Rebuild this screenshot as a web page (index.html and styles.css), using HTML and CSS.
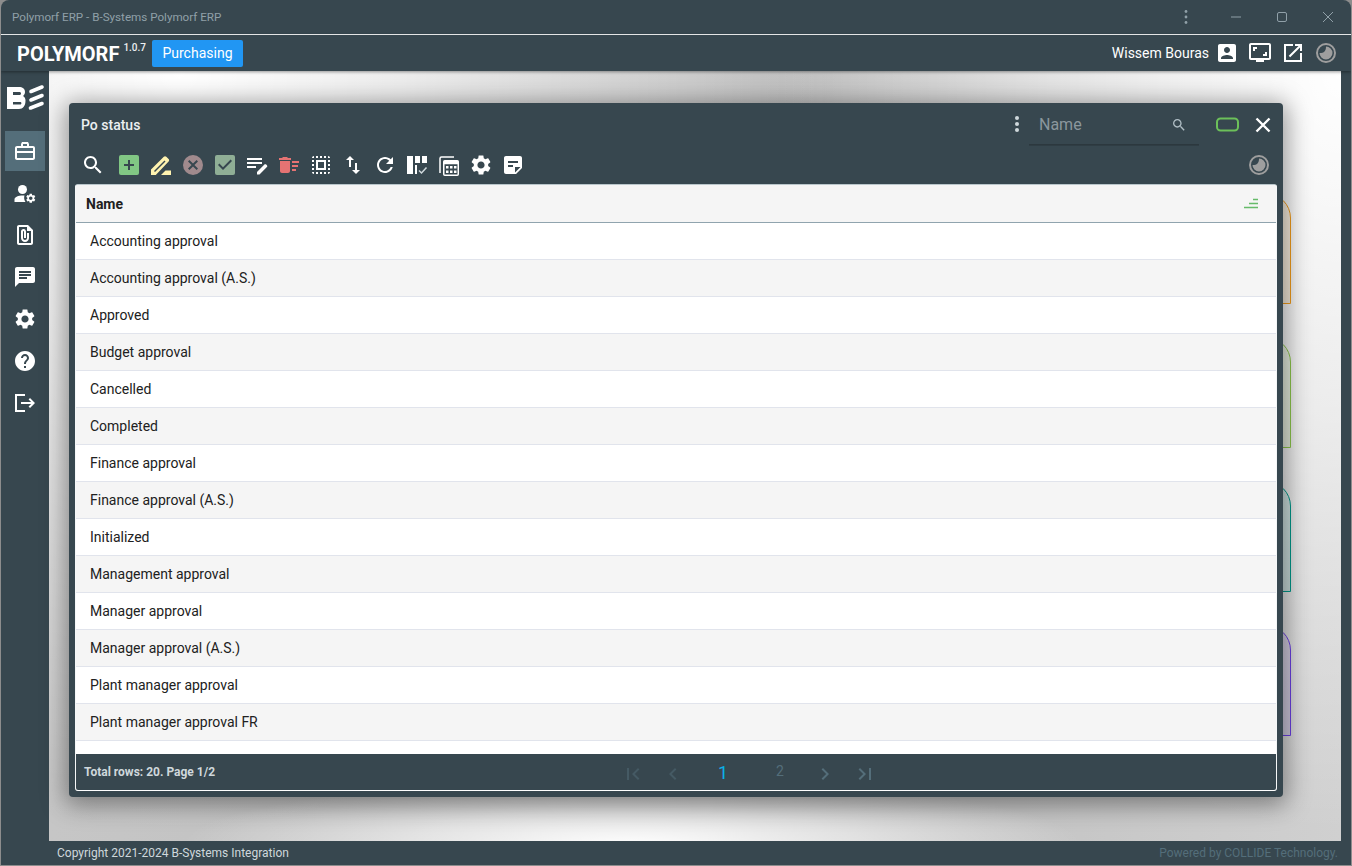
FILE: index.html
```html
<!DOCTYPE html>
<html lang="en">
<head>
<meta charset="utf-8">
<title>Polymorf ERP - B-Systems Polymorf ERP</title>
<link rel="stylesheet" href="styles.css">
</head>
<body>
<div class="window">
  <div class="titlebar">
    <span class="title-text">Polymorf ERP - B-Systems Polymorf ERP</span>
    <div class="title-controls">
      <svg class="ctl-dots" width="12" height="16" viewBox="0 0 12 16"><circle cx="6" cy="2.500" r="1.400"/><circle cx="6" cy="8" r="1.400"/><circle cx="6" cy="13.500" r="1.400"/></svg>
      <svg class="ctl" width="12" height="12" viewBox="0 0 12 12"><path d="M1 6h10"/></svg>
      <svg class="ctl" width="12" height="12" viewBox="0 0 12 12"><rect x="1.500" y="1.500" width="9" height="9" rx="1.500"/></svg>
      <svg class="ctl" width="12" height="12" viewBox="0 0 12 12"><path d="M1 1l10 10M11 1L1 11"/></svg>
    </div>
  </div>
  <header class="appbar">
    <span class="brand">POLYMORF</span><span class="version">1.0.7</span>
    <span class="module">Purchasing</span>
    <div class="user">
      <span class="user-name">Wissem Bouras</span>
      <svg class="ico" viewBox="0 0 24 24"><path d="M3 5v14c0 1.100.89 2 2 2h14c1.100 0 2-.9 2-2V5c0-1.100-.91-2-2-2H5c-1.110 0-2 .9-2 2zm12 4c0 1.660-1.340 3-3 3s-3-1.340-3-3 1.340-3 3-3 3 1.340 3 3zm-9 8c0-2 4-3.100 6-3.100s6 1.100 6 3.100v1H6v-1z"/></svg>
      <svg class="ico" viewBox="0 0 24 24"><path d="M3 2h18c1.100 0 2 .9 2 2v13c0 1.100-.9 2-2 2h-5v2H8v-2H3c-1.100 0-2-.9-2-2V4c0-1.100.9-2 2-2zm0 2v13h18V4H3zm2 2h4v2H7v2H5V6zm14 9h-4v-2h2v-2h2v4z"/></svg>
      <svg class="ico" viewBox="0 0 24 24"><path d="M19 19H5V5h7V3H3v18h18v-9h-2v7zM14 3v2h3.590l-9.830 9.830 1.410 1.410L19 6.410V10h2V3h-7z"/></svg>
      <svg class="ico" viewBox="0 0 24 24"><circle class="hist-ring" cx="12" cy="12" r="9"/><path class="hist-a" d="M12 5.500a6.500 6.500 0 1 1-6.500 6.500c2.500 0 4-.3 5-1.500s1.500-2.500 1.500-5z"/></svg>
    </div>
  </header>
  <div class="middle">
    <nav class="sidebar">
      <svg class="logo" width="36" height="24" viewBox="0 0 36 24"><path fill-rule="evenodd" d="M0 2h12c3.500 0 6 1.800 6 5 0 1.800-.8 3.200-2 4 1.500.8 2.500 2.200 2.500 4.500 0 5.500-2.500 8.500-6.500 8.500H0zM6 7v3h6.500c.9 0 1.500-.6 1.500-1.500S13.400 7 12.500 7zm0 10v2.500h7c.9 0 1.400-.5 1.400-1.250S13.900 17 13 17z"/><path class="logo-bars" d="M24 6.500 35 2M24 15 35 10.500M23.500 23 35 18.500"/></svg>
      <a class="nav-item active"><svg class="ico" viewBox="0 0 24 24"><path d="M20 7h-4V5l-1-2H9L8 5v2H4c-1.100 0-2 .9-2 2v10c0 1.100.9 2 2 2h16c1.100 0 2-.9 2-2V9c0-1.100-.9-2-2-2zM10 5h4v2h-4V5zM4 9h16v3H4V9zm0 10v-5h16v5H4z"/></svg></a>
      <a class="nav-item"><svg class="ico" viewBox="0 0 24 24"><circle cx="9.500" cy="7.500" r="4.500"/><path d="M1.500 20v-2.500c0-2.500 4-4 8-4 .7 0 1.300 0 2 .1-.7 1.900-.4 4.600 1 6.400z"/><g transform="translate(12 10.500) scale(.48)"><path d="M19.140 12.940c.04-.3.06-.61.06-.94 0-.32-.02-.64-.07-.94l2.030-1.580c.18-.14.23-.41.12-.61l-1.920-3.320c-.12-.22-.37-.29-.59-.22l-2.390.96c-.5-.38-1.030-.7-1.620-.94l-.36-2.540c-.04-.24-.24-.41-.48-.41h-3.840c-.24 0-.43.17-.47.41l-.36 2.540c-.59.24-1.130.57-1.620.94l-2.390-.96c-.22-.08-.47 0-.59.22L2.740 8.870c-.12.21-.08.47.12.61l2.030 1.580c-.05.3-.09.63-.09.94s.02.64.07.94l-2.030 1.580c-.18.14-.23.41-.12.61l1.920 3.320c.12.22.37.29.59.22l2.390-.96c.5.38 1.030.7 1.620.94l.36 2.540c.05.24.24.41.48.41h3.840c.24 0 .44-.17.47-.41l.36-2.540c.59-.24 1.130-.56 1.620-.94l2.390.96c.22.08.47 0 .59-.22l1.920-3.320c.12-.22.07-.47-.12-.61l-2.010-1.580zM12 15.600c-1.980 0-3.600-1.620-3.600-3.600s1.620-3.600 3.600-3.600 3.600 1.620 3.600 3.600-1.620 3.600-3.600 3.600z"/></g></svg></a>
      <a class="nav-item"><svg class="ico" viewBox="0 0 24 24"><path d="M15 2H6c-1.100 0-2 .9-2 2v16c0 1.100.9 2 2 2h12c1.100 0 2-.9 2-2V7l-5-5zM6 20V4h8v4h4v12H6zm10-10v5c0 2.210-1.790 4-4 4s-4-1.790-4-4V8.500c0-1.470 1.260-2.640 2.760-2.490 1.300.13 2.240 1.320 2.240 2.630V15h-2V8.500c0-.28-.22-.5-.5-.5s-.5.22-.5.5V15c0 1.100.9 2 2 2s2-.9 2-2v-5h2z"/></svg></a>
      <a class="nav-item"><svg class="ico" viewBox="0 0 24 24"><path d="M20 2H4c-1.100 0-1.990.9-1.990 2L2 22l4-4h14c1.100 0 2-.9 2-2V4c0-1.100-.9-2-2-2zM6 12h8v2H6v-2zm0-3h12v2H6V9zm0-3h12v2H6V6z"/></svg></a>
      <a class="nav-item"><svg class="ico" viewBox="0 0 24 24"><use href="#gear"/></svg></a>
      <a class="nav-item"><svg class="ico" viewBox="0 0 24 24"><path d="M12 2C6.480 2 2 6.480 2 12s4.480 10 10 10 10-4.480 10-10S17.520 2 12 2zm1 17h-2v-2h2v2zm2.070-7.750l-.9.92C13.450 12.900 13 13.500 13 15h-2v-.5c0-1.100.45-2.100 1.170-2.830l1.240-1.260c.37-.36.59-.86.59-1.410 0-1.100-.9-2-2-2s-2 .9-2 2H8c0-2.210 1.790-4 4-4s4 1.790 4 4c0 .88-.36 1.680-.93 2.250z"/></svg></a>
      <a class="nav-item"><svg class="ico" viewBox="0 0 24 24"><path d="M17 7l-1.410 1.410L18.170 11H8v2h10.170l-2.580 2.580L17 17l5-5zM4 5h8V3H2v18h10v-2H4V5z"/></svg></a>
    </nav>
    <main class="desktop">
      <div class="card card-orange"></div>
      <div class="card card-green"></div>
      <div class="card card-teal"></div>
      <div class="card card-purple"></div>
      <section class="modal">
        <div class="modal-head">
          <span class="modal-title">Po status</span>
          <svg class="head-dots" width="6" height="18" viewBox="0 0 6 18"><circle cx="3" cy="3" r="2"/><circle cx="3" cy="9" r="2"/><circle cx="3" cy="15" r="2"/></svg>
          <label class="search">
            <span class="search-label">Name</span>
            <svg class="search-ico" viewBox="0 0 24 24"><use href="#search"/></svg>
          </label>
          <svg class="size-ico" width="24" height="16" viewBox="0 0 24 16"><rect x="1" y="1.500" width="21" height="12" rx="3.500"/></svg>
          <svg class="close-ico" width="24" height="24" viewBox="0 0 24 24"><path d="M5.500 5.500l13 13M18.500 5.500l-13 13"/></svg>
        </div>
        <div class="toolbar">
          <svg class="ico tool-first" viewBox="0 0 24 24"><path id="search" d="M15.500 14h-.79l-.28-.27C15.410 12.590 16 11.110 16 9.500 16 5.910 13.090 3 9.500 3S3 5.910 3 9.500 5.910 16 9.500 16c1.610 0 3.090-.59 4.230-1.570l.27.28v.79l5 4.990L20.490 19l-4.990-5zm-6 0C7.010 14 5 11.990 5 9.500S7.010 5 9.500 5 14 7.010 14 9.500 11.990 14 9.500 14z"/></svg>
          <svg class="ico tool-add" viewBox="0 0 24 24"><rect x="2" y="2" width="20" height="20" rx="2"/><path class="dark" d="M11 7h2v4h4v2h-4v4h-2v-4H7v-2h4z"/></svg>
          <svg class="ico tool-edit" viewBox="0 0 24 24"><path d="M2 22v-5.500L14.800 3.700c.7-.7 1.800-.7 2.500 0l2.300 2.300c.7.7.7 1.800 0 2.500L6.800 22z"/><path class="slit" d="M5.500 18.500 16 8"/><path d="M12 22l4.500-4.500H22V22z"/></svg>
          <svg class="ico tool-cancel" viewBox="0 0 24 24"><circle cx="12" cy="12" r="10"/><path class="dark" d="M8.400 7L12 10.600 15.600 7 17 8.400 13.400 12l3.600 3.600-1.400 1.400-3.600-3.600L8.400 17 7 15.600l3.600-3.600L7 8.400z"/></svg>
          <svg class="ico tool-ok" viewBox="0 0 24 24"><rect x="2" y="2" width="20" height="20" rx="2"/><path class="dark" d="M10 17l-5-5 1.400-1.400 3.600 3.600 7.600-7.600L19 8z"/></svg>
          <svg class="ico" viewBox="0 0 24 24"><path d="M2 5h15v2H2zm0 4h15v2H2zm0 4h9v2H2zm12.500 8.500H12V19l7.400-7.400c.5-.5 1.300-.5 1.800 0l.7.7c.5.5.5 1.300 0 1.800z"/></svg>
          <svg class="ico tool-del" viewBox="0 0 24 24"><path d="M15 16h4v2h-4zm0-8h7v2h-7zm0 4h6v2h-6zM3 18c0 1.100.9 2 2 2h6c1.100 0 2-.9 2-2V8H3v10zM14 5h-3l-1-1H6L5 5H2v2h12z"/></svg>
          <svg class="ico" viewBox="0 0 24 24"><path d="M3 5h2V3c-1.100 0-2 .9-2 2zm0 8h2v-2H3v2zm4 8h2v-2H7v2zM3 9h2V7H3v2zm10-6h-2v2h2V3zm6 0v2h2c0-1.100-.9-2-2-2zM5 21v-2H3c0 1.100.9 2 2 2zm-2-4h2v-2H3v2zM9 3H7v2h2V3zm2 18h2v-2h-2v2zm8-8h2v-2h-2v2zm0 8c1.100 0 2-.9 2-2h-2v2zm0-12h2V7h-2v2zm0 8h2v-2h-2v2zm-4 4h2v-2h-2v2zm0-16h2V3h-2v2zM7 17h10V7H7v10zm2-8h6v6H9V9z"/></svg>
          <svg class="ico" viewBox="0 0 24 24"><path d="M16 17.010V10h-2v7.010h-3L15 21l4-3.990h-3zM9 3L5 6.990h3V14h2V6.990h3L9 3z"/></svg>
          <svg class="ico" viewBox="0 0 24 24"><path d="M17.650 6.350C16.200 4.900 14.210 4 12 4c-4.420 0-7.990 3.580-7.990 8s3.570 8 7.990 8c3.730 0 6.840-2.550 7.730-6h-2.080c-.82 2.330-3.040 4-5.650 4-3.310 0-6-2.690-6-6s2.690-6 6-6c1.660 0 3.140.69 4.220 1.780L13 11h7V4l-2.350 2.350z"/></svg>
          <svg class="ico" viewBox="0 0 24 24"><path d="M2 3h6v18H2zm8 0h5v7h-5zm7 0h5v7h-5zm-7 9h2v9h-2z"/><path class="thin" d="M14 17.500l2.500 2.500 5-5.500"/></svg>
          <svg class="ico" viewBox="0 0 24 24"><path class="outline" d="M3 20V5.500C3 4.700 3.700 4 4.500 4H17"/><rect class="outline" x="6.750" y="7.750" width="14.500" height="14.500" rx="1"/><path d="M6.750 7.750h14.500v3.500H6.750zM9 13h2.500v2.500H9zm4 0h2.500v2.500H13zm4 0h2.500v2.500H17zM9 17.500h2.500V20H9zm4 0h2.500V20H13zm4 0h2.500V20H17z"/></svg>
          <svg class="ico" viewBox="0 0 24 24"><path id="gear" d="M19.140 12.940c.04-.3.06-.61.06-.94 0-.32-.02-.64-.07-.94l2.030-1.580c.18-.14.23-.41.12-.61l-1.920-3.320c-.12-.22-.37-.29-.59-.22l-2.390.96c-.5-.38-1.030-.7-1.620-.94l-.36-2.540c-.04-.24-.24-.41-.48-.41h-3.840c-.24 0-.43.17-.47.41l-.36 2.540c-.59.24-1.130.57-1.620.94l-2.390-.96c-.22-.08-.47 0-.59.22L2.740 8.870c-.12.21-.08.47.12.61l2.030 1.580c-.05.3-.09.63-.09.94s.02.64.07.94l-2.030 1.580c-.18.14-.23.41-.12.61l1.920 3.320c.12.22.37.29.59.22l2.390-.96c.5.38 1.030.7 1.620.94l.36 2.540c.05.24.24.41.48.41h3.840c.24 0 .44-.17.47-.41l.36-2.540c.59-.24 1.130-.56 1.620-.94l2.390.96c.22.08.47 0 .59-.22l1.920-3.320c.12-.22.07-.47-.12-.61l-2.010-1.580zM12 15.600c-1.980 0-3.600-1.620-3.600-3.600s1.620-3.600 3.600-3.600 3.600 1.620 3.600 3.600-1.620 3.600-3.600 3.600z"/></svg>
          <svg class="ico" viewBox="0 0 24 24"><path d="M19 3H4.990C3.890 3 3 3.900 3 5l.01 14c0 1.100.89 2 1.990 2h10l6-6V5c0-1.100-.9-2-2-2zM7 8h10v2H7V8zm5 6H7v-2h5v2zm2 5.500V14h5.500L14 19.500z"/></svg>
          <svg class="ico tool-hist" viewBox="0 0 24 24"><circle class="hist-ring" cx="12" cy="12" r="9"/><path class="hist-a" d="M12 5.500a6.500 6.500 0 1 1-6.500 6.500c2.500 0 4-.3 5-1.500s1.500-2.500 1.500-5z"/></svg>
        </div>
        <div class="grid">
          <div class="grid-head">
            <span>Name</span>
            <svg class="sort-ico" width="16" height="12" viewBox="0 0 16 12"><path d="M10 1.500h5M6 5.500h9M1 9.500h14"/></svg>
          </div>
          <div class="grid-body">
            <div class="row">Accounting approval</div>
            <div class="row">Accounting approval (A.S.)</div>
            <div class="row">Approved</div>
            <div class="row">Budget approval</div>
            <div class="row">Cancelled</div>
            <div class="row">Completed</div>
            <div class="row">Finance approval</div>
            <div class="row">Finance approval (A.S.)</div>
            <div class="row">Initialized</div>
            <div class="row">Management approval</div>
            <div class="row">Manager approval</div>
            <div class="row">Manager approval (A.S.)</div>
            <div class="row">Plant manager approval</div>
            <div class="row">Plant manager approval FR</div>
          </div>
          <div class="pager">
            <span class="pager-total">Total rows: 20. Page 1/2</span>
            <div class="pager-nav">
              <svg class="pg pg-off" viewBox="0 0 24 24"><path d="M18.410 16.590L13.820 12l4.590-4.590L17 6l-6 6 6 6zM6 6h2v12H6z"/></svg>
              <svg class="pg pg-off" viewBox="0 0 24 24"><path d="M15.410 7.410L14 6l-6 6 6 6 1.410-1.410L10.830 12z"/></svg>
              <span class="pg-cur">1</span>
              <span class="pg-num">2</span>
              <svg class="pg pg-on" viewBox="0 0 24 24"><path d="M10 6L8.590 7.410 13.170 12l-4.580 4.590L10 18l6-6z"/></svg>
              <svg class="pg pg-on" viewBox="0 0 24 24"><path d="M5.590 7.410L10.180 12l-4.590 4.590L7 18l6-6-6-6zM16 6h2v12h-2z"/></svg>
            </div>
          </div>
        </div>
      </section>
    </main>
    <div class="right-strip"></div>
  </div>
  <footer class="statusbar">
    <span class="copyright">Copyright 2021-2024 B-Systems Integration</span>
    <span class="powered">Powered by COLLIDE Technology.</span>
  </footer>
</div>
</body>
</html>
```

FILE: styles.css
```css
* { box-sizing: border-box; }
html, body { height: 100%; }
body {
  margin: 0;
  background: #8d8d8d;
  font-family: Roboto, "Liberation Sans", sans-serif;
  overflow: hidden;
}
.window {
  height: 865px;
  margin: 0 1px 0 1px;
  background: #37474f;
  border-radius: 8px 8px 0 0;
  display: flex;
  flex-direction: column;
  overflow: hidden;
}
.titlebar {
  height: 35px;
  flex: none;
  display: flex;
  align-items: center;
  justify-content: space-between;
  border-bottom: 1px solid #f4f6f7;
  padding: 1px 17px 2px 11px;
}
.title-text { font-size: 11.650px; color: #90a0a8; }
.title-controls { display: flex; align-items: center; }
.ctl-dots { fill: #90a0a8; margin-right: 38px; }
.ctl { fill: none; stroke: #90a0a8; stroke-width: 1; margin-left: 34px; }
.ctl-dots + .ctl { margin-left: 0; }
.appbar {
  height: 36px;
  flex: none;
  display: flex;
  align-items: center;
  padding: 0 13px 0 16px;
  box-shadow: 0 1px 3px rgba(0,0,0,.4);
  position: relative;
  z-index: 2;
}
.brand { font-size: 20px; font-weight: 700; color: #fff; margin-top: 2px; }
.version { font-size: 10px; color: #eceff1; font-weight: 500; margin: -12px 0 0 4px; }
.module {
  margin-left: 6px;
  background: #2196f3;
  color: #fff;
  font-size: 14px;
  height: 27px;
  width: 91px;
  line-height: 27px;
  text-align: center;
  border-radius: 2px;
  margin-top: 1px;
}
.user { margin-left: auto; display: flex; align-items: center; gap: 9px; }
.user-name { font-size: 14px; color: #fff; margin-right: -3px; }
.ico { width: 24px; height: 24px; fill: #fff; flex: none; display: block; }
.hist-ring { fill: none; stroke: #9e9e9e; stroke-width: 2; }
.hist-a { fill: #9e9e9e; }
.middle { flex: 1; display: flex; min-height: 0; }
.sidebar {
  width: 48px;
  flex: none;
  display: flex;
  flex-direction: column;
  align-items: center;
  padding-top: 14px;
}
.logo { fill: #fff; margin-bottom: 22px; overflow: visible; }
.logo-bars { fill: none; stroke: #fff; stroke-width: 3.600; stroke-linecap: round; }
.nav-item {
  width: 40px;
  height: 42px;
  display: flex;
  align-items: center;
  justify-content: center;
  flex: none;
}
.nav-item.active { background: #546e7a; height: 40px; margin-bottom: 2px; }
.nav-item:nth-of-type(2) { margin-bottom: -1px; }
.desktop {
  flex: 1;
  min-width: 0;
  position: relative;
  display: flex;
  padding: 32px 58px 44px 20px;
  background:
    radial-gradient(ellipse 650px 760px at 130px 0, #ffffff 0%, rgba(255,255,255,.7) 35%, rgba(255,255,255,0) 100%),
    radial-gradient(ellipse 560px 760px at 1292px 0, #ffffff 0%, rgba(255,255,255,.6) 45%, rgba(255,255,255,0) 100%),
    radial-gradient(ellipse 450px 70px at 583px 775px, #ffffff 0%, rgba(255,255,255,.55) 50%, rgba(255,255,255,0) 100%),
    linear-gradient(90deg, #c6c6c6 0%, #bcbcbc 55%, #d0d0d0 100%);
}
.card {
  position: absolute;
  right: 50px;
  width: 300px;
  height: 111px;
  border: 1px solid;
  border-radius: 0 25px 0 0;
}
.card-orange { top: 122px; border-color: #ef9a1a; background: rgba(239,154,26,.12); }
.card-green { top: 266px; border-color: #8bc34a; background: rgba(139,195,74,.12); }
.card-teal { top: 410px; border-color: #009688; background: rgba(0,150,136,.12); }
.card-purple { top: 554px; border-color: #6a3fe0; background: rgba(106,63,224,.12); }
.modal {
  flex: 1;
  min-width: 0;
  position: relative;
  z-index: 1;
  background: #37474f;
  border-radius: 4px;
  box-shadow: 0 4px 24px 4px rgba(0,0,0,.4);
  display: flex;
  flex-direction: column;
  padding: 0 6px 6px;
}
.modal-head {
  height: 42px;
  flex: none;
  display: flex;
  align-items: center;
  padding: 2px 2px 0 6px;
}
.modal-title { font-size: 14px; font-weight: 500; color: #eceff1; }
.head-dots { fill: #cfd8dc; margin-left: auto; margin-right: 9px; margin-top: -3px; }
.search {
  width: 170px;
  height: 39px;
  margin-top: 1px;
  display: flex;
  align-items: center;
  justify-content: space-between;
  padding: 0 12px 0 10px;
  border-bottom: 1px solid #2c383e;
  box-shadow: 0 1px 0 #2f3d44;
}
.search-label { font-size: 16px; color: #8b979d; margin-top: -2px; }
.search-ico { width: 16px; height: 16px; fill: #b0bec5; margin-top: -1px; }
.size-ico { fill: none; stroke: #6cc05a; stroke-width: 2; margin-left: 17px; }
.close-ico { fill: none; stroke: #fff; stroke-width: 2.400; margin-left: 11px; }
.toolbar {
  height: 39px;
  flex: none;
  display: flex;
  align-items: flex-start;
  gap: 8px;
  padding: 8px 6px 0 6px;
}
.tool-first { margin-right: 4px; }
.tool-add { fill: #81c784; }
.tool-edit { fill: #fff3b0; }
.tool-cancel { fill: #a08a8d; }
.tool-ok { fill: #8fae95; }
.dark { fill: #37474f; }
.slit { fill: none; stroke: #37474f; stroke-width: 1.500; }
.tool-del { fill: #e57373; }
.thin { fill: none; stroke: #cfd8dc; stroke-width: 1.500; }
.outline { fill: none; stroke: #fff; stroke-width: 1.500; }
.tool-hist { margin-left: auto; }
.grid {
  flex: 1;
  min-height: 0;
  display: flex;
  flex-direction: column;
  background: #fff;
  border: 1px solid #f5f7f8;
  border-top-color: #b9c6cb;
  border-bottom-color: #fff;
  border-radius: 3px;
  overflow: hidden;
}
.grid-head {
  height: 38px;
  flex: none;
  display: flex;
  align-items: center;
  justify-content: space-between;
  padding: 0 17px 0 10px;
  background: #f5f5f5;
  border-bottom: 1px solid #90a4ae;
  font-size: 14px;
  font-weight: 700;
  color: #212121;
}
.sort-ico { fill: none; stroke: #66bb6a; stroke-width: 1.600; }
.grid-body { flex: 1; min-height: 0; }
.row {
  height: 37px;
  padding: 0 14px;
  display: flex;
  align-items: center;
  border-bottom: 1px solid #e1e4ec;
  font-size: 14px;
  color: #212121;
  background: #fff;
}
.row:nth-child(even) { background: #f5f5f5; }
.pager {
  height: 36px;
  flex: none;
  position: relative;
  display: flex;
  align-items: center;
  padding-left: 8px;
  background: #37474f;
}
.pager-total { font-size: 12px; font-weight: 700; color: #cfd8dc; }
.pager-nav {
  position: absolute;
  left: 545px;
  top: 0;
  height: 36px;
  display: flex;
  align-items: center;
  width: 300px;
}
.pg { width: 24px; height: 24px; flex: none; margin-top: 3px; }
.pg-off { fill: #455a64; margin-right: 16px; }
.pg-on { fill: #546e7a; margin-right: 16px; }
.pg-cur { font-size: 18px; color: #0cb0ea; width: 24px; margin-left: 10px; text-align: center; margin-top: 1px; }
.pg-num { font-size: 14px; color: #546e7a; width: 24px; margin: -2px 21px 0 33px; text-align: center; }
.right-strip { width: 10px; flex: none; }
.statusbar {
  height: 24px;
  flex: none;
  display: flex;
  align-items: center;
  justify-content: space-between;
  padding: 0 13px 0 56px;
  font-size: 12px;
}
.copyright { color: #cfd8dc; }
.powered { color: #546e7a; }
```
